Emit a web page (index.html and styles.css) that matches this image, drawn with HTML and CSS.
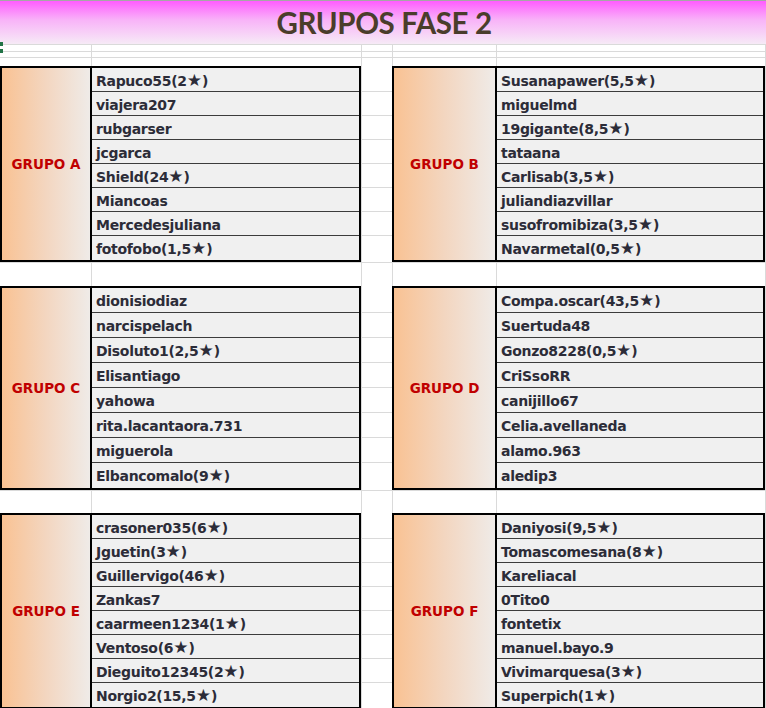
FILE: index.html
```html
<!DOCTYPE html>
<html lang="es">
<head>
<meta charset="utf-8">
<title>GRUPOS FASE 2</title>
<link rel="stylesheet" href="styles.css">
</head>
<body>
<div class="sheet">
  <div class="title">GRUPOS FASE 2</div>
  <div class="grid-row h7"><span></span><span></span><span></span><span></span><span></span><span></span></div>
  <div class="grid-row h6"><span></span><span></span><span></span><span></span><span></span><span></span></div>
  <div class="grid-row h9"><span></span><span></span><span></span><span></span><span></span><span></span></div>

  <div class="band r24">
    <div class="group left">
      <div class="label">GRUPO A</div>
      <ul class="names">
        <li>Rapuco55(2<span class="star">★</span>)</li><li>viajera207</li><li>rubgarser</li><li>jcgarca</li>
        <li>Shield(24<span class="star">★</span>)</li><li>Miancoas</li><li>Mercedesjuliana</li><li>fotofobo(1,5<span class="star">★</span>)</li>
      </ul>
    </div>
    <div class="gapcol"><i></i><i></i><i></i><i></i><i></i><i></i><i></i><i></i></div>
    <div class="group right">
      <div class="label">GRUPO B</div>
      <ul class="names">
        <li>Susanapawer(5,5<span class="star">★</span>)</li><li>miguelmd</li><li>19gigante(8,5<span class="star">★</span>)</li><li>tataana</li>
        <li>Carlisab(3,5<span class="star">★</span>)</li><li>juliandiazvillar</li><li>susofromibiza(3,5<span class="star">★</span>)</li><li>Navarmetal(0,5<span class="star">★</span>)</li>
      </ul>
    </div>
    <div class="edge"></div>
  </div>

  <div class="grid-row gap24"><span></span><span></span><span></span><span></span><span></span><span></span></div>

  <div class="band r25">
    <div class="group left">
      <div class="label">GRUPO C</div>
      <ul class="names">
        <li>dionisiodiaz</li><li>narcispelach</li><li>Disoluto1(2,5<span class="star">★</span>)</li><li>Elisantiago</li>
        <li>yahowa</li><li>rita.lacantaora.731</li><li>miguerola</li><li>Elbancomalo(9<span class="star">★</span>)</li>
      </ul>
    </div>
    <div class="gapcol"><i></i><i></i><i></i><i></i><i></i><i></i><i></i><i></i></div>
    <div class="group right">
      <div class="label">GRUPO D</div>
      <ul class="names">
        <li>Compa.oscar(43,5<span class="star">★</span>)</li><li>Suertuda48</li><li>Gonzo8228(0,5<span class="star">★</span>)</li><li>CriSsoRR</li>
        <li>canijillo67</li><li>Celia.avellaneda</li><li>alamo.963</li><li>aledip3</li>
      </ul>
    </div>
    <div class="edge"></div>
  </div>

  <div class="grid-row gap23"><span></span><span></span><span></span><span></span><span></span><span></span></div>

  <div class="band r24">
    <div class="group left">
      <div class="label">GRUPO E</div>
      <ul class="names">
        <li>crasoner035(6<span class="star">★</span>)</li><li>Jguetin(3<span class="star">★</span>)</li><li>Guillervigo(46<span class="star">★</span>)</li><li>Zankas7</li>
        <li>caarmeen1234(1<span class="star">★</span>)</li><li>Ventoso(6<span class="star">★</span>)</li><li>Dieguito12345(2<span class="star">★</span>)</li><li>Norgio2(15,5<span class="star">★</span>)</li>
      </ul>
    </div>
    <div class="gapcol"><i></i><i></i><i></i><i></i><i></i><i></i><i></i><i></i></div>
    <div class="group right">
      <div class="label">GRUPO F</div>
      <ul class="names">
        <li>Daniyosi(9,5<span class="star">★</span>)</li><li>Tomascomesana(8<span class="star">★</span>)</li><li>Kareliacal</li><li>0Tito0</li>
        <li>fontetix</li><li>manuel.bayo.9</li><li>Vivimarquesa(3<span class="star">★</span>)</li><li>Superpich(1<span class="star">★</span>)</li>
      </ul>
    </div>
    <div class="edge"></div>
  </div>

  <span class="handle h-a"></span>
  <span class="handle h-b"></span>
</div>
</body>
</html>
```

FILE: styles.css
```css
* { box-sizing: border-box; }
html, body { margin: 0; padding: 0; background: #ffffff; }
body { width: 766px; height: 708px; overflow: hidden; }

.sheet {
  position: relative;
  width: 766px;
  font-family: "DejaVu Sans", Verdana, sans-serif;
}

.title {
  height: 44px;
  border-top: 1px solid #a6a6a6;
  background: linear-gradient(to bottom, #ff5cff 0%, #f8b4f8 45%, #f6eaf6 100%);
  display: flex;
  align-items: center;
  justify-content: center;
  padding-left: 2px;
  font-family: "Lato", "Open Sans", sans-serif;
  font-weight: 700;
  font-size: 29.5px;
  letter-spacing: -0.4px;
  color: #4a3d2b;
}

/* spreadsheet filler rows with gridlines */
.grid-row {
  display: grid;
  grid-template-columns: 91px 270px 31px 104px 269px 1px;
  border-top: 1px solid #dadada;
}
.grid-row span { border-left: 1px solid #dadada; }
.grid-row span:first-child { border-left: none; }
.grid-row span:last-child { border-left: none; background: #dadada; }
.h7 { height: 7px; }
.h6 { height: 6px; }
.h9 { height: 9px; }
.gap24 { height: 24px; }
.gap23 { height: 23px; }

.band {
  display: grid;
  grid-template-columns: 361px 31px 373px 1px;
}
.edge { background: #dadada; }

.group {
  display: flex;
  border: 2px solid #000;
}
.label {
  flex: none;
  display: flex;
  align-items: center;
  justify-content: center;
  border-right: 2px solid #000;
  background: linear-gradient(to right, #f9c293 0%, #f3d6c0 50%, #efebe8 100%);
  color: #c00000;
  font-weight: 700;
  font-size: 13.5px;
}
.left .label { width: 90px; }
.right .label { width: 103px; }

.names {
  flex: 1;
  list-style: none;
  margin: 0;
  padding: 0;
  background: #f0f0f0;
}
.names li {
  border-bottom: 1px solid #3c3c3c;
  padding-left: 4px;
  font-weight: 700;
  font-size: 14px;
  letter-spacing: -0.3px;
  color: #2c2c38;
  white-space: nowrap;
  overflow: hidden;
}
.names li:last-child { border-bottom: none; }

.star {
  font-size: 17px;
  line-height: 0;
  letter-spacing: 0;
}

.r24 .names li { height: 24px; line-height: 26px; }
.r24 .names li:last-child { line-height: 27px; }
.r25 .names li { height: 25px; line-height: 26px; }
.r25 .names li:last-child { line-height: 27px; }

.gapcol {
  border-left: 1px solid #dadada;
  padding-top: 2px;
}
.gapcol i { display: block; border-bottom: 1px solid #dadada; }
.r24 .gapcol i { height: 24px; }
.r25 .gapcol i { height: 25px; }
.gapcol i:last-child { border-bottom: none; }

.handle {
  position: absolute;
  left: 0;
  width: 3px;
  background: #217346;
}
.h-a { top: 42px; height: 4px; }
.h-b { top: 49px; height: 4px; }
```
